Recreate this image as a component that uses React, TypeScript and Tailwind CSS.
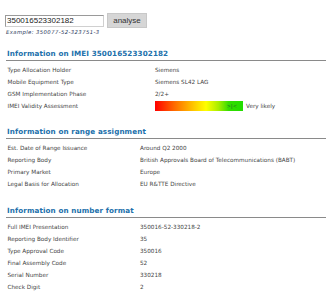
import React from "react";

interface Row {
  label: string;
  value: React.ReactNode;
}

const body = "font-['DejaVu_Sans',Verdana,sans-serif]";

const ValidityBar: React.FC = () => (
  <div className="flex items-center">
    <div className="relative h-[10px] w-[88px] bg-[linear-gradient(to_right,#ff0000_0%,#ff6a00_22%,#ffcc00_45%,#ffff00_58%,#aaee00_72%,#33dd00_84%,#22dd00_100%)]">
      <span className="absolute left-[72px] top-0 font-['Liberation_Sans',Arial,sans-serif] text-[6px] leading-[10px] tracking-[0.6px] text-[#2a6a2a]">
        &gt;|&lt;
      </span>
    </div>
    <span className="ml-[3px]">Very likely</span>
  </div>
);

const Section: React.FC<{
  title: string;
  rows: Row[];
  labelWidth: string;
  top: string;
}> = ({ title, rows, labelWidth, top }) => (
  <div className={`${top} ml-[1px]`}>
    <div className="border-b border-[#8a8a8a] pb-[1px]">
      <h2 className="pl-[1px] text-[7.2px] font-bold leading-[10px] tracking-[0.1px] text-[#2170ab]">
        {title}
      </h2>
    </div>
    <div className={`mt-[3px] ${body} text-[5.7px] text-[#444]`}>
      {rows.map((r) => (
        <div key={r.label} className="flex h-[12px] items-center">
          <div className={`${labelWidth} shrink-0 pl-[1.5px]`}>{r.label}</div>
          <div>{r.value}</div>
        </div>
      ))}
    </div>
  </div>
);

const imeiRows: Row[] = [
  { label: "Type Allocation Holder", value: "Siemens" },
  { label: "Mobile Equipment Type", value: "Siemens SL42 LAG" },
  { label: "GSM Implementation Phase", value: "2/2+" },
  { label: "IMEI Validity Assessment", value: <ValidityBar /> },
];

const rangeRows: Row[] = [
  { label: "Est. Date of Range Issuance", value: "Around Q2 2000" },
  {
    label: "Reporting Body",
    value: "British Approvals Board of Telecommunications (BABT)",
  },
  { label: "Primary Market", value: "Europe" },
  { label: "Legal Basis for Allocation", value: "EU R&TTE Directive" },
];

const formatRows: Row[] = [
  { label: "Full IMEI Presentation", value: "350016-52-330218-2" },
  { label: "Reporting Body Identifier", value: "35" },
  { label: "Type Approval Code", value: "350016" },
  { label: "Final Assembly Code", value: "52" },
  { label: "Serial Number", value: "330218" },
  { label: "Check Digit", value: "2" },
];

export default function App() {
  return (
    <div className={`h-[300px] w-[331px] bg-white pl-[5px] pr-[5px] pt-[13px] ${body}`}>
      <div className="flex h-[15px] items-center font-['Liberation_Sans',Arial,sans-serif]">
        <input
          readOnly
          value="350016523302182"
          className="h-[12px] w-[99px] border border-[#9a9a9a] border-b-[#d0d0d0] border-r-[#d0d0d0] bg-white px-[1px] text-[8px] leading-[10px] text-[#222] outline-none"
        />
        <button className="ml-[3px] h-[15px] w-[40px] border border-[#c8c8c8] bg-[#d6d6d6] text-[8px] leading-[13px] text-[#333]">
          analyse
        </button>
      </div>
      <div className="mt-[1px] pl-[1px] text-[5.3px] italic leading-[7px] tracking-[0.4px] text-[#2a3a5c]">
        Example: 350077-52-323751-3
      </div>

      <Section
        top="mt-[13px]"
        title="Information on IMEI 350016523302182"
        rows={imeiRows}
        labelWidth="w-[149px]"
      />
      <Section
        top="mt-[15px]"
        title="Information on range assignment"
        rows={rangeRows}
        labelWidth="w-[134px]"
      />
      <Section
        top="mt-[16px]"
        title="Information on number format"
        rows={formatRows}
        labelWidth="w-[134px]"
      />
    </div>
  );
}
